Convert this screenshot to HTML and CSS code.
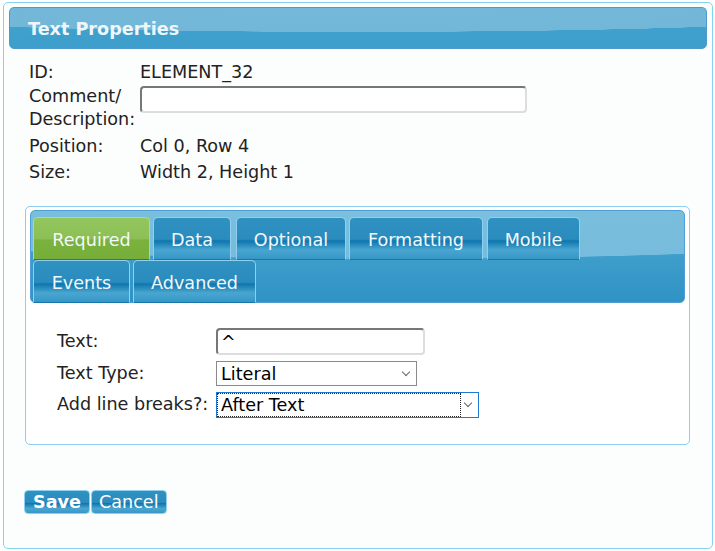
FILE: index.html
```html
<!DOCTYPE html>
<html lang="en">
<head>
    <meta charset="UTF-8">
    <title>Text Properties</title>
    <link rel="stylesheet" href="styles.css">
</head>
<body>
    <div class="dialog">
        <div class="titlebar">Text Properties</div>

        <table class="props">
            <tr><td class="lbl">ID:</td><td>ELEMENT_32</td></tr>
            <tr class="comment"><td class="lbl">Comment/<br>Description:</td><td><input type="text" class="comment-input"></td></tr>
            <tr><td class="lbl">Position:</td><td>Col 0, Row 4</td></tr>
            <tr><td class="lbl">Size:</td><td>Width 2, Height 1</td></tr>
        </table>

        <div class="tabs">
            <ul class="tab-nav">
                <li class="tab active t-required">Required</li>
                <li class="tab t-data">Data</li>
                <li class="tab t-optional">Optional</li>
                <li class="tab t-formatting">Formatting</li>
                <li class="tab t-mobile">Mobile</li>
                <li class="row-break"></li>
                <li class="tab t-events">Events</li>
                <li class="tab t-advanced">Advanced</li>
            </ul>
            <table class="panel">
                <tr><td class="lbl">Text:</td><td><input type="text" class="text-input" value="^"></td></tr>
                <tr><td class="lbl">Text Type:</td><td><div class="select type-select">Literal<span class="caret"></span></div></td></tr>
                <tr><td class="lbl">Add line breaks?:</td><td><div class="select break-select focused"><span class="sel-text">After Text</span><span class="caret"></span></div></td></tr>
            </table>
        </div>

        <div class="buttons">
            <button class="btn save">Save</button><button class="btn">Cancel</button>
        </div>
    </div>
</body>
</html>
```

FILE: styles.css
```css
* {
    margin: 0;
    padding: 0;
    box-sizing: border-box;
}

body {
    font-family: "DejaVu Sans", Verdana, sans-serif;
    font-size: 17.6px;
    color: #222;
    background: #fff;
}

.dialog {
    margin: 2px 2px 0 3px;
    height: 547px;
    border: 1px solid #86d2f0;
    border-radius: 5px;
    background: #fcfdfd;
    padding: 4px 5px;
}

.titlebar {
    height: 42px;
    border: 1px solid #4d9bcd;
    border-radius: 5px;
    background:
        radial-gradient(ellipse 500px 18px at 50% 6px, #75b9da 0, #72b7d8 99%, transparent 100%),
        linear-gradient(#44a3ce, #3d9ecb);
    color: #eef6fa;
    font-weight: bold;
    font-size: 17.6px;
    padding: 11px 0 0 18px;
}

.props {
    border-collapse: collapse;
    margin: 10px 0 0 20px;
}

.props td {
    padding: 0;
    height: 26px;
    vertical-align: middle;
    line-height: 23px;
}

.props .lbl {
    width: 111px;
}

.props .comment td {
    vertical-align: top;
    height: 48px;
}

.comment-input {
    width: 387px;
    height: 27px;
    margin-top: 1px;
    border: 2px solid #777;
    border-right-color: #ddd;
    border-bottom-color: #ddd;
    border-radius: 4px;
    background: #fff;
}

.tabs {
    margin: 21px 0 0 16px;
    width: 665px;
    height: 239px;
    border: 1px solid #8ccdf0;
    border-radius: 5px;
    background: #fff;
    padding: 3px 4px;
}

.tab-nav {
    list-style: none;
    display: flex;
    flex-wrap: wrap;
    height: 93px;
    padding: 6px 2px 0;
    border: 1px solid #4f9fd6;
    border-radius: 5px;
    background:
        radial-gradient(ellipse 700px 52px at 55% -4px, #7cbfdf 0, #77bcdc 99%, transparent 100%),
        linear-gradient(#4ea8d0, #2f93c5);
}

.row-break {
    flex-basis: 100%;
    height: 0;
}

.tab {
    height: 43px;
    padding-top: 12px;
    text-align: center;
    color: #f2f8fb;
    border: 1px solid #8fd0f2;
    border-bottom: 1px solid #1677ad;
    border-radius: 5px 5px 0 0;
    background: linear-gradient(#3092c1 0%, #2a8bbd 52%, #0e76ae 56%, #4aa6d0 78%, #3596c6 100%);
}

.t-required { width: 117px; margin-right: 3px; }
.t-data { width: 78px; margin-right: 5px; }
.t-optional { width: 110px; margin-right: 3px; }
.t-formatting { width: 134px; margin-right: 4px; }
.t-mobile { width: 93px; }
.t-events { width: 97px; margin-right: 3px; }
.t-advanced { width: 123px; }

.tab.active {
    border-color: #b3dc7c;
    border-bottom-color: #1677ad;
    background: linear-gradient(#94c65f 0%, #8cbf55 50%, #7bb23f 54%, #76ae39 100%);
}

.panel {
    border-collapse: collapse;
    margin: 22px 0 0 27px;
}

.panel td {
    padding: 0;
    vertical-align: middle;
}

.panel .lbl {
    width: 159px;
}

.panel tr:nth-child(1) td { height: 31px; }
.panel tr:nth-child(2) td { height: 33px; }
.panel tr:nth-child(3) td { height: 28px; }

.text-input {
    width: 209px;
    height: 27px;
    border: 2px solid #777;
    border-right-color: #ddd;
    border-bottom-color: #ddd;
    border-radius: 4px;
    background: #fff;
    font-family: inherit;
    font-size: 17.6px;
    padding: 0 3px;
    color: #000;
    margin-top: 2px;
}

.select {
    position: relative;
    height: 25px;
    border: 1px solid #8a8a8a;
    background: #fff;
    color: #000;
    padding: 0 0 0 4px;
    line-height: 24px;
}

.type-select {
    width: 201px;
    margin-top: 2px;
}

.break-select {
    width: 263px;
    height: 26px;
    margin-top: 3px;
}

.break-select.focused {
    border: 1px solid #1f78d1;
    padding: 0;
}

.sel-text {
    display: block;
    width: 244px;
    height: 24px;
    border: 1px dotted #222;
    padding-left: 3px;
    line-height: 23px;
}

.caret {
    position: absolute;
    right: 7px;
    top: 7px;
    width: 6px;
    height: 6px;
    border-right: 1px solid #666;
    border-bottom: 1px solid #666;
    transform: rotate(45deg);
}

.buttons {
    display: flex;
    gap: 1px;
    margin: 45px 0 0 15px;
}

.btn {
    height: 24px;
    font-family: inherit;
    font-size: 17.6px;
    color: #fff;
    border: 1px solid #8fd0f2;
    border-radius: 4px;
    padding: 0 7px;
    line-height: 20px;
    background: linear-gradient(#3092c1 0%, #2a8bbd 52%, #0e76ae 56%, #4aa6d0 80%, #3596c6 100%);
}

.btn.save {
    font-weight: bold;
    padding: 0 8px;
}
```
